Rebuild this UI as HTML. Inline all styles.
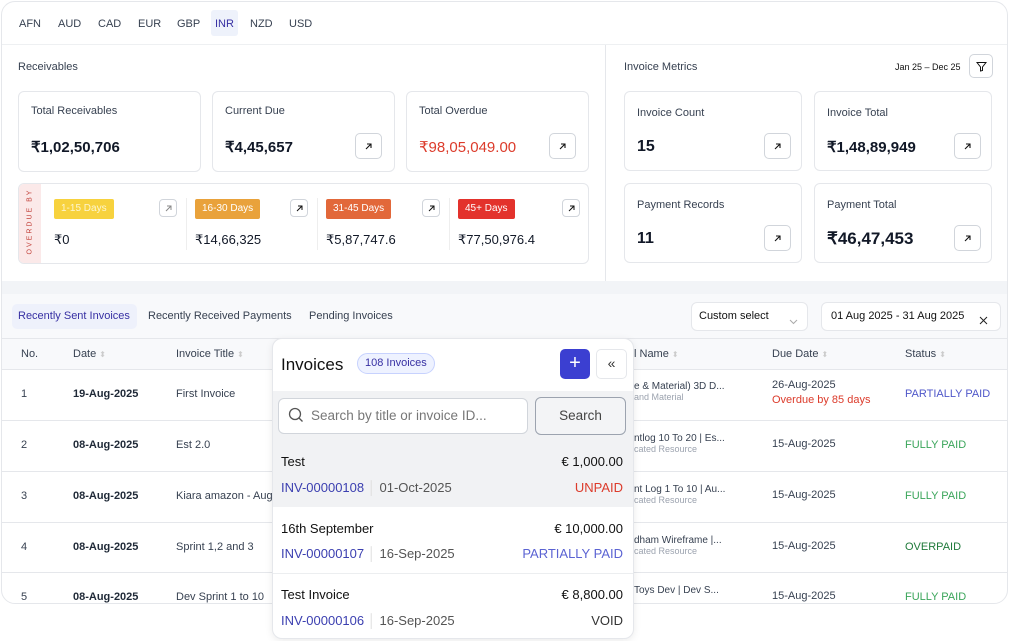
<!DOCTYPE html>
<html><head><meta charset="utf-8"><style>
*{box-sizing:border-box;margin:0;padding:0}
body{width:1010px;height:641px;background:#fff;font-family:"Liberation Sans",sans-serif;color:#1f2937;position:relative;overflow:hidden}
.card{position:absolute;left:1px;top:1px;width:1007px;height:603px;border:1px solid #e5e7eb;border-radius:14px;overflow:hidden;background:#fff}
.abs{position:absolute}
.cur{position:absolute;top:16px;font-size:11px;color:#374151}
.box{position:absolute;border:1px solid #e5e7eb;border-radius:6px;background:#fff}
.lbl{position:absolute;font-size:11px;color:#374151}
.val{position:absolute;font-size:15px;font-weight:bold;color:#111827}
.arr{position:absolute;width:27px;height:26px;border:1px solid #d1d5db;border-radius:5px;background:#fff;display:flex;align-items:center;justify-content:center}
.arr.s{width:18px;height:18px;border-radius:4px}
.badge{position:absolute;top:15px;height:20px;font-size:10px;color:#fff;padding:0 7px;line-height:20px;border-radius:2px}
.th{position:absolute;top:348px;font-size:11px;color:#374151}
.td{position:absolute;font-size:11px;color:#374151}
.b{font-weight:bold;color:#1f2937}
.row{position:absolute;left:0;width:1007px;border-top:1px solid #e5e7eb}
.sub{font-size:9px;color:#9ca3af}
</style></head><body>
<div class="card">
 <div class="abs" style="left:0;top:0;width:1007px;height:43px;border-bottom:1px solid #eef0f2"></div>
 <div class="cur" style="left:17px">AFN</div>
 <div class="cur" style="left:56px">AUD</div>
 <div class="cur" style="left:96px">CAD</div>
 <div class="cur" style="left:136px">EUR</div>
 <div class="abs" style="left:209px;top:8px;width:27px;height:26px;background:#eef2fb;border-radius:3px"></div>
 <div class="cur" style="left:175px">GBP</div>
 <div class="cur" style="left:213px;color:#3730a3">INR</div>
 <div class="cur" style="left:248px">NZD</div>
 <div class="cur" style="left:287px">USD</div>

 <div class="lbl" style="left:16px;top:59px">Receivables</div>
 <div class="box" style="left:16px;top:89px;width:183px;height:81px"></div>
 <div class="lbl" style="left:29px;top:103px">Total Receivables</div>
 <div class="val" style="left:29px;top:136px">₹1,02,50,706</div>
 <div class="box" style="left:210px;top:89px;width:183px;height:81px"></div>
 <div class="lbl" style="left:223px;top:103px">Current Due</div>
 <div class="val" style="left:223px;top:136px">₹4,45,657</div>
 <div class="arr" style="left:353px;top:131px"><svg width="9" height="9"><path d="M2 7L7 2M3 2h4v4" stroke="#111" fill="none" stroke-width="1.1"/></svg></div>
 <div class="box" style="left:404px;top:89px;width:183px;height:81px"></div>
 <div class="lbl" style="left:417px;top:103px">Total Overdue</div>
 <div class="val" style="left:417px;top:136px;color:#dc3b2b;font-weight:normal">₹98,05,049.00</div>
 <div class="arr" style="left:547px;top:131px"><svg width="9" height="9"><path d="M2 7L7 2M3 2h4v4" stroke="#111" fill="none" stroke-width="1.1"/></svg></div>

 <div class="box" style="left:16px;top:181px;width:571px;height:81px;overflow:hidden">
  <div class="abs" style="left:0;top:0;width:22px;height:81px;background:#fbe9e9"></div>
  <div class="abs" style="left:-25px;top:34px;width:72px;text-align:center;transform:rotate(-90deg);font-size:7px;letter-spacing:2px;color:#c2413a">OVERDUE BY</div>
  <div class="badge" style="left:35px;background:#f7d23e;color:#fdf6d0">1-15 Days</div>
  <div class="arr s" style="left:140px;top:15px"><svg width="7" height="7"><path d="M1 6L6 1M2 1h4v4" stroke="#888" fill="none"/></svg></div>
  <div class="val" style="left:35px;top:48px;font-size:13px;font-weight:normal">₹0</div>
  <div class="abs" style="left:167px;top:14px;width:1px;height:52px;background:#eee"></div>
  <div class="badge" style="left:176px;background:#e9a23b">16-30 Days</div>
  <div class="arr s" style="left:271px;top:15px"><svg width="7" height="7"><path d="M1 6L6 1M2 1h4v4" stroke="#111" fill="none"/></svg></div>
  <div class="val" style="left:176px;top:48px;font-size:13px;font-weight:normal">₹14,66,325</div>
  <div class="abs" style="left:298px;top:14px;width:1px;height:52px;background:#eee"></div>
  <div class="badge" style="left:307px;background:#e2683a">31-45 Days</div>
  <div class="arr s" style="left:403px;top:15px"><svg width="7" height="7"><path d="M1 6L6 1M2 1h4v4" stroke="#111" fill="none"/></svg></div>
  <div class="val" style="left:307px;top:48px;font-size:13px;font-weight:normal">₹5,87,747.6</div>
  <div class="abs" style="left:430px;top:14px;width:1px;height:52px;background:#eee"></div>
  <div class="badge" style="left:439px;background:#e3322c">45+ Days</div>
  <div class="arr s" style="left:543px;top:15px"><svg width="7" height="7"><path d="M1 6L6 1M2 1h4v4" stroke="#111" fill="none"/></svg></div>
  <div class="val" style="left:439px;top:48px;font-size:13px;font-weight:normal">₹77,50,976.4</div>
 </div>

 <div class="abs" style="left:603px;top:43px;width:1px;height:237px;background:#e5e7eb"></div>
 <div class="lbl" style="left:622px;top:59px">Invoice Metrics</div>
 <div class="lbl" style="left:893px;top:60px;font-size:9px;color:#111">Jan 25 – Dec 25</div>
 <div class="arr" style="left:967px;top:52px;width:24px;height:24px"><svg width="11" height="11"><path d="M1 1.5h9L6.5 6v3.5L4.5 10V6z" stroke="#111" fill="none"/></svg></div>
 <div class="box" style="left:622px;top:89px;width:178px;height:80px"></div>
 <div class="lbl" style="left:635px;top:105px">Invoice Count</div>
 <div class="val" style="left:635px;top:136px;font-size:16px">15</div>
 <div class="arr" style="left:762px;top:131px"><svg width="9" height="9"><path d="M2 7L7 2M3 2h4v4" stroke="#111" fill="none" stroke-width="1.1"/></svg></div>
 <div class="box" style="left:812px;top:89px;width:178px;height:80px"></div>
 <div class="lbl" style="left:825px;top:105px">Invoice Total</div>
 <div class="val" style="left:825px;top:136px">₹1,48,89,949</div>
 <div class="arr" style="left:952px;top:131px"><svg width="9" height="9"><path d="M2 7L7 2M3 2h4v4" stroke="#111" fill="none" stroke-width="1.1"/></svg></div>
 <div class="box" style="left:622px;top:181px;width:178px;height:80px"></div>
 <div class="lbl" style="left:635px;top:197px">Payment Records</div>
 <div class="val" style="left:635px;top:228px;font-size:16px">11</div>
 <div class="arr" style="left:762px;top:223px"><svg width="9" height="9"><path d="M2 7L7 2M3 2h4v4" stroke="#111" fill="none" stroke-width="1.1"/></svg></div>
 <div class="box" style="left:812px;top:181px;width:178px;height:80px"></div>
 <div class="lbl" style="left:825px;top:197px">Payment Total</div>
 <div class="val" style="left:825px;top:227px;font-size:17px">₹46,47,453</div>
 <div class="arr" style="left:952px;top:223px"><svg width="9" height="9"><path d="M2 7L7 2M3 2h4v4" stroke="#111" fill="none" stroke-width="1.1"/></svg></div>

 <div class="abs" style="left:0;top:279px;width:1007px;height:13px;background:#f2f4f7"></div>
 <div class="abs" style="left:0;top:292px;width:1007px;height:45px;background:#f8f9fb;border-bottom:1px solid #e5e7eb"></div>
 <div class="abs" style="left:10px;top:302px;width:125px;height:25px;background:#eef1fb;border-radius:5px"></div>
 <div class="td" style="left:16px;top:308px;color:#3730a3">Recently Sent Invoices</div>
 <div class="td" style="left:146px;top:308px">Recently Received Payments</div>
 <div class="td" style="left:307px;top:308px">Pending Invoices</div>
 <div class="box" style="left:689px;top:300px;width:117px;height:29px"></div>
 <div class="td" style="left:697px;top:308px;color:#111">Custom select</div>
 <div class="abs" style="left:787px;top:310px"><svg width="9" height="6"><path d="M1 1l3.5 3.5L8 1" stroke="#aaa" fill="none"/></svg></div>
 <div class="box" style="left:819px;top:300px;width:180px;height:29px"></div>
 <div class="td" style="left:829px;top:308px;color:#111">01 Aug 2025 - 31 Aug 2025</div>
 <div class="abs" style="left:977px;top:310px"><svg width="9" height="9"><path d="M1 1l7 7M8 1l-7 7" stroke="#222"/></svg></div>

 <div class="abs" style="left:0;top:337px;width:1007px;height:30px;background:#f8f9fb"></div>
 <div class="th" style="left:19px;top:346px">No.</div>
 <div class="th" style="left:71px;top:346px">Date <span style="color:#ccc;font-size:8px">⬍</span></div>
 <div class="th" style="left:174px;top:346px">Invoice Title <span style="color:#ccc;font-size:8px">⬍</span></div>
 <div class="th" style="left:632px;top:346px">l Name <span style="color:#ccc;font-size:8px">⬍</span></div>
 <div class="th" style="left:770px;top:346px">Due Date <span style="color:#ccc;font-size:8px">⬍</span></div>
 <div class="th" style="left:903px;top:346px">Status <span style="color:#ccc;font-size:8px">⬍</span></div>

 <div class="row" style="top:367px"></div>
 <div class="td" style="left:19px;top:386px">1</div><div class="td b" style="left:71px;top:386px">19-Aug-2025</div><div class="td" style="left:174px;top:386px">First Invoice</div>
 <div class="td" style="left:632px;top:379px;font-size:10px">e &amp; Material) 3D D...<br><span class="sub">and Material</span></div>
 <div class="td" style="left:770px;top:377px">26-Aug-2025<br><span style="color:#dc3b2b;line-height:19px">Overdue by 85 days</span></div>
 <div class="td" style="left:903px;top:386px;color:#4f57c9">PARTIALLY PAID</div>
 <div class="row" style="top:418px"></div>
 <div class="td" style="left:19px;top:437px">2</div><div class="td b" style="left:71px;top:437px">08-Aug-2025</div><div class="td" style="left:174px;top:437px">Est 2.0</div>
 <div class="td" style="left:632px;top:431px;font-size:10px">ntlog 10 To 20 | Es...<br><span class="sub">cated Resource</span></div>
 <div class="td" style="left:770px;top:436px">15-Aug-2025</div><div class="td" style="left:903px;top:437px;color:#3aa55a">FULLY PAID</div>
 <div class="row" style="top:469px"></div>
 <div class="td" style="left:19px;top:488px">3</div><div class="td b" style="left:71px;top:488px">08-Aug-2025</div><div class="td" style="left:174px;top:488px">Kiara amazon - Aug</div>
 <div class="td" style="left:632px;top:482px;font-size:10px">nt Log 1 To 10 | Au...<br><span class="sub">cated Resource</span></div>
 <div class="td" style="left:770px;top:487px">15-Aug-2025</div><div class="td" style="left:903px;top:488px;color:#3aa55a">FULLY PAID</div>
 <div class="row" style="top:520px"></div>
 <div class="td" style="left:19px;top:539px">4</div><div class="td b" style="left:71px;top:539px">08-Aug-2025</div><div class="td" style="left:174px;top:539px">Sprint 1,2 and 3</div>
 <div class="td" style="left:632px;top:533px;font-size:10px">dham Wireframe |...<br><span class="sub">cated Resource</span></div>
 <div class="td" style="left:770px;top:538px">15-Aug-2025</div><div class="td" style="left:903px;top:539px;color:#1f7a3a">OVERPAID</div>
 <div class="row" style="top:570px"></div>
 <div class="td" style="left:19px;top:589px">5</div><div class="td b" style="left:71px;top:589px">08-Aug-2025</div><div class="td" style="left:174px;top:589px">Dev Sprint 1 to 10</div>
 <div class="td" style="left:632px;top:583px;font-size:10px">Toys Dev | Dev S...</div>
 <div class="td" style="left:770px;top:588px">15-Aug-2025</div><div class="td" style="left:903px;top:589px;color:#3aa55a">FULLY PAID</div>
</div>

<div class="abs" style="left:272px;top:338px;width:362px;height:301px;background:#fff;border:1px solid #e5e7eb;border-radius:10px;overflow:hidden;box-shadow:0 2px 8px rgba(0,0,0,.08)">
 <div class="abs" style="left:8px;top:16px;font-size:17px;color:#111">Invoices</div>
 <div class="abs" style="left:84px;top:14px;height:21px;padding:0 7px;border:1px solid #c7d2fe;background:#eef2ff;border-radius:11px;font-size:11px;line-height:19px;color:#3730a3">108 Invoices</div>
 <div class="abs" style="left:287px;top:10px;width:30px;height:30px;background:#3b3fd1;border-radius:5px;color:#fff;text-align:center;font-size:20px;line-height:28px">+</div>
 <div class="abs" style="left:323px;top:10px;width:31px;height:30px;border:1px solid #e5e7eb;border-radius:5px;text-align:center;font-size:14px;line-height:27px;color:#333">«</div>
 <div class="abs" style="left:0;top:52px;width:362px;height:50px;background:#f1f2f4"></div>
 <div class="abs" style="left:5px;top:59px;width:250px;height:36px;background:#fff;border:1px solid #d1d5db;border-radius:6px"></div>
 <svg class="abs" style="left:15px;top:68px" width="16" height="16"><circle cx="7" cy="7" r="5.5" stroke="#555" fill="none" stroke-width="1.3"/><path d="M11 11l3.5 3.5" stroke="#555" stroke-width="1.3"/></svg>
 <div class="abs" style="left:38px;top:69px;font-size:13.5px;color:#777">Search by title or invoice ID...</div>
 <div class="abs" style="left:262px;top:58px;width:91px;height:38px;border:1px solid #9ca3af;border-radius:6px;background:#f3f4f6;text-align:center;line-height:36px;font-size:13.5px;color:#444">Search</div>
 <div class="abs" style="left:0;top:102px;width:362px;height:66px;background:#f1f2f4"></div>
 <div class="abs" style="left:8px;top:115px;font-size:13px;color:#111">Test</div>
 <div class="abs" style="right:10px;top:115px;font-size:13px;color:#111">€ 1,000.00</div>
 <div class="abs" style="left:8px;top:141px;font-size:13px;color:#3b3fb0">INV-00000108 <span style="color:#ddd">│</span> <span style="color:#555">01-Oct-2025</span></div>
 <div class="abs" style="right:10px;top:141px;font-size:13px;color:#dc3b2b">UNPAID</div>
 <div class="abs" style="left:0;top:234px;width:362px;height:1px;background:#eceef0"></div>
 <div class="abs" style="left:8px;top:182px;font-size:13px;color:#111">16th September</div>
 <div class="abs" style="right:10px;top:182px;font-size:13px;color:#111">€ 10,000.00</div>
 <div class="abs" style="left:8px;top:207px;font-size:13px;color:#3b3fb0">INV-00000107 <span style="color:#ddd">│</span> <span style="color:#555">16-Sep-2025</span></div>
 <div class="abs" style="right:10px;top:207px;font-size:13px;color:#5b63d3">PARTIALLY PAID</div>
 <div class="abs" style="left:8px;top:248px;font-size:13px;color:#111">Test Invoice</div>
 <div class="abs" style="right:10px;top:248px;font-size:13px;color:#111">€ 8,800.00</div>
 <div class="abs" style="left:8px;top:274px;font-size:13px;color:#3b3fb0">INV-00000106 <span style="color:#ddd">│</span> <span style="color:#555">16-Sep-2025</span></div>
 <div class="abs" style="right:10px;top:274px;font-size:13px;color:#333">VOID</div>
</div>
</body></html>
